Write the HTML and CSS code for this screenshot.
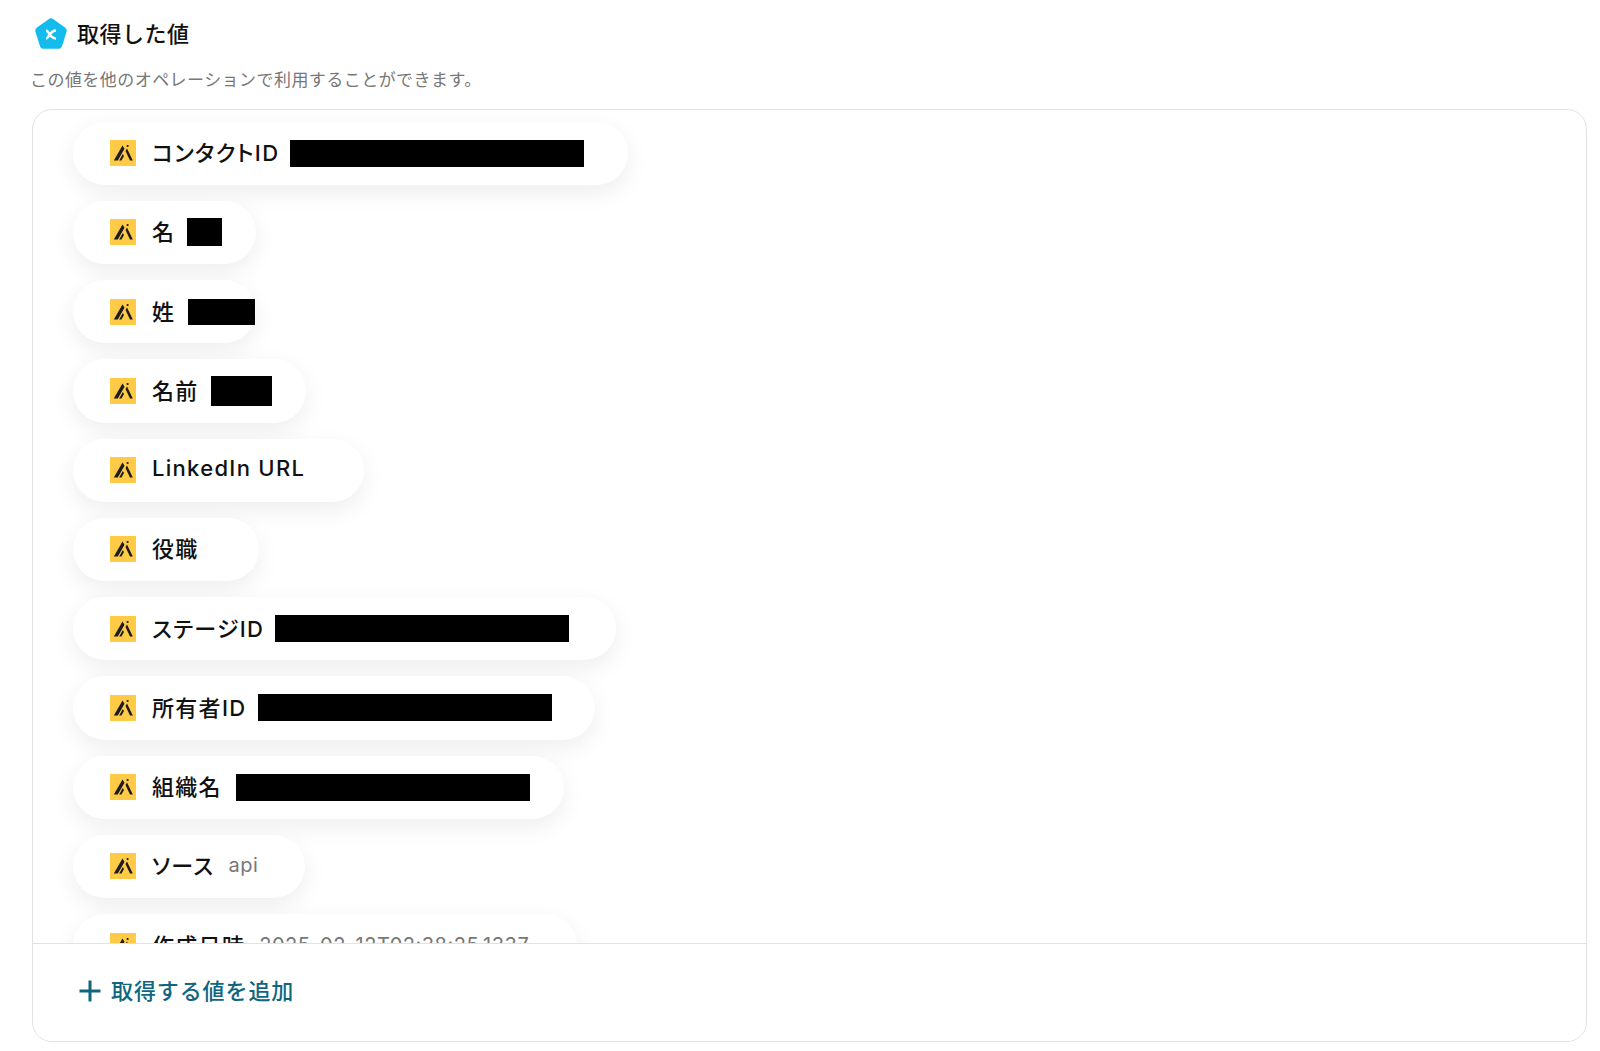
FILE: index.html
```html
<!DOCTYPE html>
<html lang="ja">

<head>
    <meta charset="UTF-8">
    <title>取得した値</title>
    <link rel="stylesheet" href="styles.css">
</head>

<body>
    <div class="section-title">
        <svg class="title-icon" viewBox="0 0 34 32">
            <path d="M14.6 1.2a4 4 0 0 1 4.8 0l11.6 8.4a4 4 0 0 1 1.5 4.5l-4.4 13.9a4 4 0 0 1-3.9 2.8H9.8a4 4 0 0 1-3.9-2.8L1.5 14.1A4 4 0 0 1 3 9.6z" fill="#14bced" />
            <path d="M12 12.500c3 0 3.500 8 10 8M22 12.500c-6.500 0-7 8-10 8" stroke="#fff" stroke-width="2.500" fill="none" />
        </svg>
        <h2>取得した値</h2>
    </div>
    <p class="section-note">この値を他のオペレーションで利用することができます。</p>

    <div class="values-box">
        <div class="values-list">
            <div class="pill pill-contact"><svg class="app-icon" viewBox="0 0 26 26"><use href="#apollo" /></svg><span class="pill-label">コンタクトID</span><span class="mask mask-long"></span></div>
            <div class="pill pill-first"><svg class="app-icon" viewBox="0 0 26 26"><use href="#apollo" /></svg><span class="pill-label">名</span><span class="mask mask-first"></span></div>
            <div class="pill pill-last"><svg class="app-icon" viewBox="0 0 26 26"><use href="#apollo" /></svg><span class="pill-label">姓</span><span class="mask mask-last"></span></div>
            <div class="pill pill-name"><svg class="app-icon" viewBox="0 0 26 26"><use href="#apollo" /></svg><span class="pill-label">名前</span><span class="mask mask-name"></span></div>
            <div class="pill pill-linkedin"><svg class="app-icon" viewBox="0 0 26 26"><use href="#apollo" /></svg><span class="pill-label">LinkedIn URL</span></div>
            <div class="pill pill-title"><svg class="app-icon" viewBox="0 0 26 26"><use href="#apollo" /></svg><span class="pill-label">役職</span></div>
            <div class="pill pill-stage"><svg class="app-icon" viewBox="0 0 26 26"><use href="#apollo" /></svg><span class="pill-label">ステージID</span><span class="mask mask-long"></span></div>
            <div class="pill pill-owner"><svg class="app-icon" viewBox="0 0 26 26"><use href="#apollo" /></svg><span class="pill-label">所有者ID</span><span class="mask mask-long mask-owner"></span></div>
            <div class="pill pill-org"><svg class="app-icon" viewBox="0 0 26 26"><use href="#apollo" /></svg><span class="pill-label">組織名</span><span class="mask mask-long mask-org"></span></div>
            <div class="pill pill-source"><svg class="app-icon" viewBox="0 0 26 26"><use href="#apollo" /></svg><span class="pill-label">ソース</span><span class="pill-value">api</span></div>
            <div class="pill pill-created"><svg class="app-icon" viewBox="0 0 26 26"><use href="#apollo" /></svg><span class="pill-label">作成日時</span><span class="pill-value">2025-02-12T02:38:25.1337</span></div>
        </div>
        <div class="values-footer">
            <svg class="plus-icon" viewBox="0 0 24 24">
                <path d="M12 1.500v21M1.500 12h21" stroke="#0f667f" stroke-width="3" fill="none" />
            </svg>
            <span class="footer-label">取得する値を追加</span>
        </div>
    </div>

    <svg class="icon-defs" width="0" height="0">
        <symbol id="apollo" viewBox="0 0 26 26">
            <rect width="26" height="26" fill="#ffcb47" />
            <path d="M12.500 5.500L3.800 20.500H7.800L14.500 8.800z" fill="#1c1c1c" />
            <path d="M12.800 14L9.200 20.500H11.500L14 16z" fill="#1c1c1c" />
            <path d="M15.500 11L20 20.500H22.800L17 8.500z" fill="#1c1c1c" />
            <circle cx="17.600" cy="6" r="1.100" fill="#1c1c1c" />
        </symbol>
    </svg>
</body>

</html>
```

FILE: styles.css
```css
body {
    font-family: 'Inter', 'Noto Sans CJK JP', sans-serif;
    margin: 0;
    padding: 17px 13px 10px 32px;
    background-color: #fff;
    color: #111;
}

.section-title {
    display: flex;
    align-items: center;
    gap: 9px;
    padding-left: 2px;
    height: 34px;
}

.title-icon {
    width: 34px;
    height: 32px;
}

.section-title h2 {
    margin: 0;
    font-size: 22px;
    font-weight: 500;
    line-height: 34px;
    letter-spacing: 0.5px;
}

.section-note {
    margin: 16px 0 0 -2px;
    font-size: 17px;
    line-height: 26px;
    letter-spacing: 0.45px;
    color: #777;
}

.values-box {
    margin-top: 16px;
    height: 931px;
    border: 1px solid #e2e2e2;
    border-radius: 20px;
    display: flex;
    flex-direction: column;
    overflow: hidden;
}

.values-list {
    flex: 1;
    min-height: 0;
    overflow: hidden;
    padding: 11.5px 40px 0;
    display: flex;
    flex-direction: column;
    align-items: flex-start;
    gap: 16px;
}

.pill {
    flex: none;
    box-sizing: border-box;
    height: 63.25px;
    padding-left: 37px;
    display: flex;
    align-items: center;
    background-color: #fff;
    border-radius: 32px;
    box-shadow: 0px 8px 24px rgba(0, 0, 0, 0.07);
}

.pill-contact { width: 555px; }
.pill-first { width: 183px; }
.pill-last { width: 183px; }
.pill-name { width: 233px; }
.pill-linkedin { width: 291px; }
.pill-title { width: 186px; }
.pill-stage { width: 543px; }
.pill-owner { width: 522px; }
.pill-org { width: 491px; }
.pill-source { width: 232px; }
.pill-created { width: 504px; }

.app-icon {
    flex: none;
    width: 26px;
    height: 26px;
    margin-right: 16px;
}

.pill-label {
    padding-bottom: 4px;
    font-size: 22px;
    font-weight: 500;
    font-feature-settings: "palt";
    letter-spacing: 1.300px;
    white-space: nowrap;
}

.pill-value {
    margin-left: 14px;
    padding-bottom: 2px;
    font-size: 20px;
    letter-spacing: 0.500px;
    color: #777;
    white-space: nowrap;
}

.mask {
    flex: none;
    height: 27px;
    background-color: #000;
}

.mask-long { width: 294px; margin-left: 11px; }
.mask-owner { margin-left: 12px; }
.mask-org { margin-left: 14px; }
.mask-first { width: 35px; height: 28px; margin-left: 12px; }
.mask-last { width: 67px; height: 26px; margin-left: 13px; }
.mask-name { width: 61px; height: 30px; margin-left: 12px; }

.values-footer {
    flex: none;
    height: 98px;
    box-sizing: border-box;
    border-top: 1px solid #e2e2e2;
    padding: 0 0 3px 45px;
    display: flex;
    align-items: center;
    gap: 9px;
    background-color: #fff;
    color: #0f667f;
}

.footer-label {
    padding-bottom: 4px;
    font-size: 22px;
    font-weight: 500;
    letter-spacing: 0.900px;
}

.plus-icon {
    width: 24px;
    height: 24px;
}

.icon-defs {
    position: absolute;
}
```
